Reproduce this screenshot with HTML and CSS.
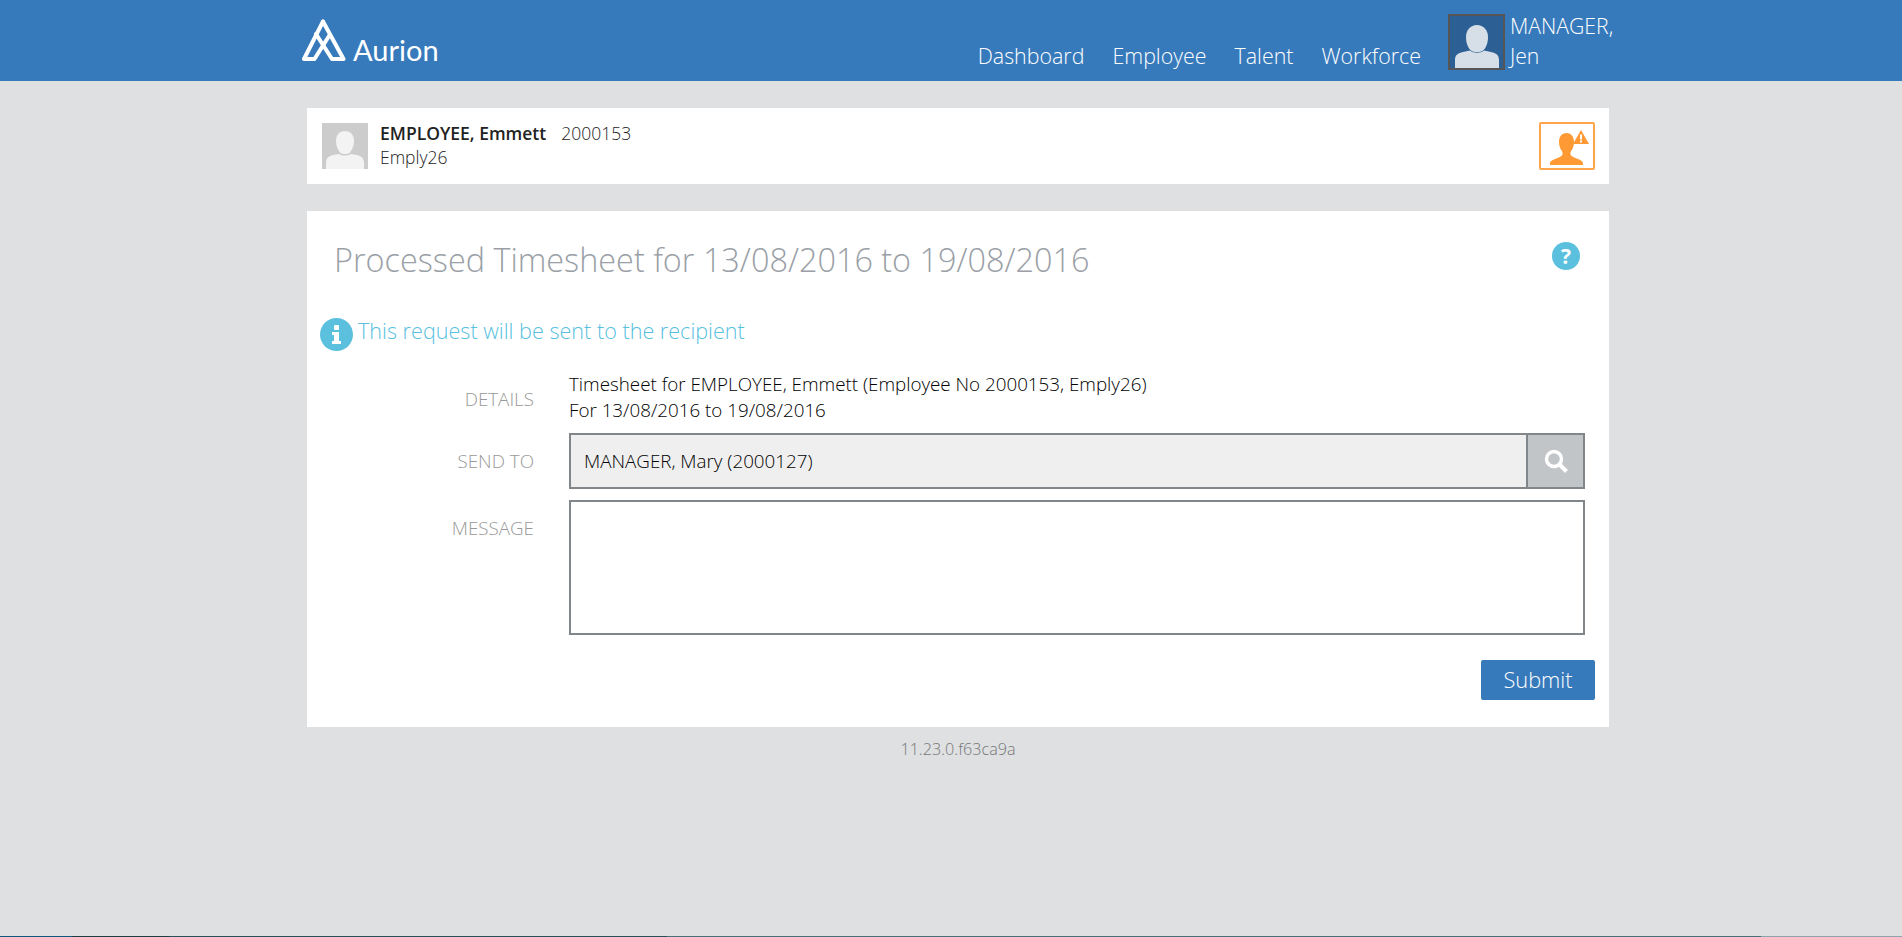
FILE: index.html
```html
<!DOCTYPE html>
<html lang="en">
<head>
  <meta charset="UTF-8">
  <meta name="viewport" content="width=device-width, initial-scale=1.0">
  <title>Processed Timesheet</title>
  <link rel="stylesheet" href="styles.css">
</head>
<body>
  <header class="topbar">
    <div class="topbar-inner">
      <a class="logo" href="#">
        <svg class="logo-mark" width="44" height="43" viewBox="0 0 44 43" fill="none" stroke="#fff" stroke-width="4" stroke-linejoin="round" stroke-linecap="round">
          <path d="M21 2.500 L41.500 40 H30 L14 15"/>
          <path d="M21 2.500 L2 40 H12.500 L27 17"/>
        </svg>
        <span class="logo-text">Aurion</span>
      </a>
      <nav class="mainnav">
        <a href="#">Dashboard</a>
        <a href="#">Employee</a>
        <a href="#">Talent</a>
        <a href="#">Workforce</a>
      </nav>
      <div class="usermenu">
        <div class="user-photo">
          <svg width="53" height="52" viewBox="0 0 53 52"><path fill="#d6dfe8" d="M27 9c-6.500 0-11 5-11 12 0 6 2 11 5 13.500 2.500 2 9.500 2 12 0 3-2.500 5-7.500 5-13.500 0-7-4.500-12-11-12z"/><path fill="#d6dfe8" d="M5 52V44c0-5 3-7 8-8l7-1.500c3 3 11 3 14 0l7 1.500c5 1 8 3 8 8v8z"/></svg>
        </div>
        <div class="user-name">MANAGER,<br>Jen</div>
      </div>
    </div>
  </header>

  <main class="page">
    <section class="card employee-card">
      <div class="emp-photo">
        <svg width="46" height="46" viewBox="0 0 46 46"><path fill="#f3f3f3" d="M23 8c-5.500 0-9 4-9 10 0 5 2 9 4 11.500 2 2 8 2 10 0 2-2.500 4-6.500 4-11.500 0-6-3.500-10-9-10z"/><path fill="#f3f3f3" d="M4 46v-6c0-5 3-7 7-8l6-1c3 2 9 2 12 0l6 1c4 1 7 3 7 8v6z"/></svg>
      </div>
      <div class="emp-info">
        <div class="emp-line"><strong>EMPLOYEE, Emmett</strong><span class="emp-no">2000153</span></div>
        <div class="emp-line">Emply26</div>
      </div>
      <div class="emp-alert">
        <svg width="52" height="44" viewBox="0 0 52 44" fill="#ff9933">
          <path d="M25.500 9c-4 0-7.500 3-7.500 9 0 4 1.500 7.500 3.500 10v2c0 2-3 3-6 4.500-4 1.500-6.500 2.500-6.500 5V41h33v-1.500c0-2.500-2.500-3.500-6.500-5-3-1.500-6-2.500-6-4.500v-2c2-2.500 3.500-6 3.500-10 0-6-3.500-9-7.500-9z"/>
          <path d="M40 6l8 14H32z"/>
          <rect x="39" y="10.500" width="2" height="5" fill="#fff"/>
          <rect x="39" y="16.500" width="2" height="2" fill="#fff"/>
        </svg>
      </div>
    </section>

    <section class="card form-card">
      <div class="title-row">
        <h1>Processed Timesheet for 13/08/2016 to 19/08/2016</h1>
        <svg class="help-icon" width="28" height="28" viewBox="0 0 28 28">
          <circle cx="14" cy="14" r="14" fill="#5bc0de"/>
          <text x="14" y="21.500" text-anchor="middle" class="help-mark">?</text>
        </svg>
      </div>

      <div class="notice">
        <svg class="notice-icon" width="33" height="33" viewBox="0 0 33 33">
          <circle cx="16.500" cy="16.500" r="16.500" fill="#5bc0de"/>
          <rect x="14" y="7" width="5" height="5" rx="1" fill="#fff"/>
          <path d="M12 14h7v9h2v3H12v-3h2v-6h-2z" fill="#fff"/>
        </svg>
        <span>This request will be sent to the recipient</span>
      </div>

      <div class="form-row details-row">
        <label class="form-label">DETAILS</label>
        <div class="form-value">
          Timesheet for EMPLOYEE, Emmett (Employee No 2000153, Emply26)<br>
          For 13/08/2016 to 19/08/2016
        </div>
      </div>
      <div class="form-row sendto-row">
        <label class="form-label">SEND TO</label>
        <div class="lookup">
          <div class="lookup-value">MANAGER, Mary (2000127)</div>
          <button class="lookup-btn" type="button">
            <svg width="26" height="26" viewBox="0 0 26 26" fill="none" stroke="#fff"><circle cx="11" cy="11" r="7.500" stroke-width="3.500"/><path d="M16.500 16.500L23.500 23.500" stroke-width="4"/></svg>
          </button>
        </div>
      </div>
      <div class="form-row message-row">
        <label class="form-label">MESSAGE</label>
        <textarea class="message-box"></textarea>
      </div>
      <div class="actions">
        <button class="btn" type="button">Submit</button>
      </div>
    </section>

    <footer class="version">11.23.0.f63ca9a</footer>
  </main>
</body>
</html>
```

FILE: styles.css
```css
* {
  box-sizing: border-box;
  margin: 0;
  padding: 0;
}
html, body {
  height: 100%;
}
body {
  font-family: "Open Sans", "Liberation Sans", sans-serif;
  background: #dee0e2;
  color: #222;
  border-bottom: 1px solid #1f4a5e;
  border-image: linear-gradient(to right, #0e5a7e 73px, #1d3c44 73px, #1d3c44 170px, #27505c 170px, #27505c 667px, #45707e 667px, #45707e 1760px, #8fa4ac 1760px) 1;
  overflow: hidden;
}
a {
  color: inherit;
  text-decoration: none;
}

/* Top bar */
.topbar {
  background: #377abc;
  height: 81px;
  color: #fff;
}
.topbar-inner {
  display: flex;
  align-items: flex-start;
  width: 1340px;
  margin-left: 302px;
}
.logo {
  display: flex;
  align-items: flex-end;
  margin-top: 19px;
  height: 43px;
}
.logo-text {
  font-family: Lato, "Open Sans", sans-serif;
  font-size: 29px;
  line-height: 32px;
  margin-left: 7px;
  margin-bottom: -4px;
}
.mainnav {
  display: flex;
  gap: 28px;
  margin-left: auto;
  margin-top: 41px;
  font-size: 21.400px;
  font-weight: 300;
  line-height: 29px;
}
.usermenu {
  display: flex;
  margin-left: 27px;
  margin-right: 22px;
  margin-top: 14px;
}
.user-photo {
  width: 57px;
  height: 56px;
  background: #2c6094;
  border: 2px solid #555;
  overflow: hidden;
}
.user-name {
  margin-left: 5px;
  margin-top: -3px;
  width: 110px;
  font-size: 21.200px;
  font-weight: 300;
  line-height: 30px;
}

/* Page */
.page {
  width: 1302px;
  margin-left: 307px;
  padding-top: 27px;
}
.card {
  background: #fff;
}
.employee-card {
  display: flex;
  align-items: center;
  height: 76px;
  padding: 0 14px 0 15px;
}
.emp-photo {
  width: 46px;
  height: 46px;
  background: #ccc;
  overflow: hidden;
}
.emp-info {
  margin-left: 12px;
  margin-top: -2px;
  font-size: 17.500px;
  font-weight: 300;
  line-height: 24px;
}
.emp-line strong {
  font-weight: 600;
}
.emp-no {
  margin-left: 15px;
}
.emp-alert {
  display: flex;
  margin-left: auto;
  width: 56px;
  height: 48px;
  border: 2px solid #ffa64d;
  border-radius: 2px;
}

.form-card {
  margin-top: 27px;
  height: 516px;
  padding: 0 24px 0 13px;
}
.title-row {
  display: flex;
  justify-content: space-between;
  padding: 28px 0 0 14px;
  height: 107px;
}
.title-row h1 {
  font-size: 32.400px;
  font-weight: 300;
  line-height: 41px;
  color: #9aa0a6;
}
.help-icon {
  margin: 3px 5px 0 0;
}
.help-mark {
  font-family: "Open Sans", sans-serif;
  font-size: 21px;
  font-weight: 700;
  fill: #fff;
}
.notice {
  display: flex;
  align-items: flex-start;
  gap: 5px;
  font-size: 21.600px;
  font-weight: 300;
  line-height: 26px;
  color: #57bfe0;
  height: 50px;
}
.notice-icon {
  flex: none;
}
.form-row {
  display: flex;
  align-items: flex-start;
}
.form-label {
  flex: none;
  width: 214px;
  text-align: right;
  font-size: 18.800px;
  font-weight: 300;
  color: #999;
  line-height: 26px;
}
.details-row {
  height: 65px;
}
.details-row .form-label {
  padding-top: 18px;
}
.form-value {
  margin-left: 35px;
  padding-top: 3px;
  font-size: 18.800px;
  font-weight: 300;
  line-height: 26px;
  color: #000;
}
.sendto-row {
  height: 67px;
}
.sendto-row .form-label {
  padding-top: 15px;
}
.lookup {
  display: flex;
  margin-left: 35px;
  width: 1016px;
  height: 56px;
  border: 2px solid #80868a;
  background: #efefef;
}
.lookup-value {
  flex: 1;
  padding-left: 13px;
  font-size: 18.800px;
  font-weight: 300;
  line-height: 52px;
  color: #000;
}
.lookup-btn {
  display: flex;
  align-items: center;
  justify-content: center;
  width: 57px;
  border: none;
  border-left: 2px solid #80868a;
  background: #c2c5c8;
}
.message-row .form-label {
  padding-top: 15px;
}
.message-box {
  display: block;
  margin-left: 35px;
  width: 1016px;
  height: 135px;
  border: 2px solid #80868a;
  background: #fff;
  resize: none;
}
.actions {
  display: flex;
  justify-content: flex-end;
  margin: 25px -10px 0 0;
}
.btn {
  width: 114px;
  height: 40px;
  padding-bottom: 2px;
  background: #377abc;
  border: none;
  border-radius: 2px;
  color: #fff;
  font-family: inherit;
  font-size: 21.800px;
  font-weight: 300;
}
.version {
  margin-top: 12px;
  text-align: center;
  font-size: 16.200px;
  font-weight: 300;
  line-height: 20px;
  color: #777;
}
```
